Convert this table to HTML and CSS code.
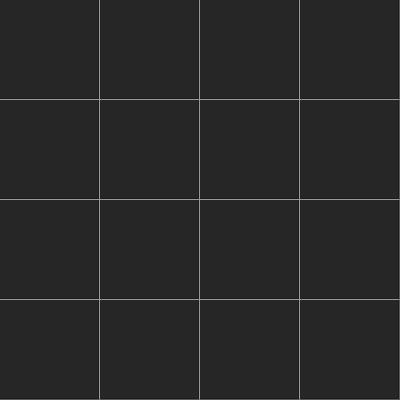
FILE: index.html
```html
<!DOCTYPE html>
<html>
<head>
<meta charset="utf-8">
<link rel="stylesheet" href="styles.css">
</head>
<body>
<div class="grid">
  <div class="cell"></div><div class="cell"></div><div class="cell"></div><div class="cell edge-r"></div>
  <div class="cell"></div><div class="cell"></div><div class="cell"></div><div class="cell edge-r"></div>
  <div class="cell"></div><div class="cell"></div><div class="cell"></div><div class="cell edge-r"></div>
  <div class="cell edge-b"></div><div class="cell edge-b"></div><div class="cell edge-b"></div><div class="cell edge-r edge-b"></div>
</div>
</body>
</html>
```
FILE: styles.css
```css
html, body {
  margin: 0;
  padding: 0;
  background: #262626;
}
.grid {
  display: grid;
  grid-template-columns: repeat(4, 100px);
  grid-template-rows: repeat(4, 100px);
  width: 400px;
  height: 400px;
}
.cell {
  box-sizing: border-box;
  background: #262626;
  border-right: 1px solid #9a9a9a;
  border-bottom: 1px solid #9a9a9a;
  box-shadow: inset -1px -1px 0 #1c1c1c;
}
.cell.edge-r {
  border-right-color: #5a5a5a;
}
.cell.edge-b {
  border-bottom-color: #5a5a5a;
}
```
